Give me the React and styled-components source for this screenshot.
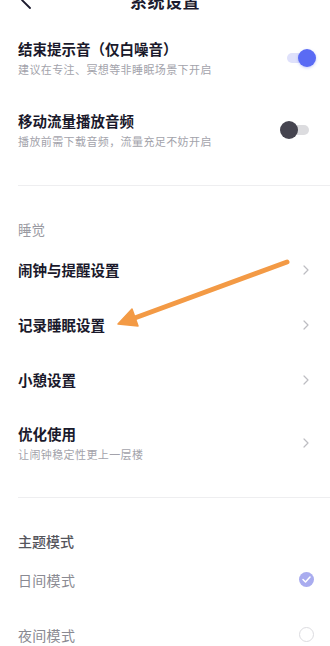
import React from "react";
import styled, { createGlobalStyle } from "styled-components";

const GlobalStyle = createGlobalStyle`
  html, body {
    margin: 0;
    padding: 0;
    background: #ffffff;
    overflow: hidden;
  }
  body {
    font-family: "Noto Sans CJK SC", "Noto Sans", sans-serif;
  }
`;

const Screen = styled.div`
  position: relative;
  width: 330px;
  height: 646px;
  overflow: hidden;
  background: #fff;
`;

// page is scrolled down a bit, the header is half hidden
const Page = styled.div`
  margin-top: -22px;
  display: flex;
  flex-direction: column;
`;

const Header = styled.div`
  height: 44px;
  display: flex;
  align-items: center;
  justify-content: center;
  position: relative;
`;

const BackBtn = styled.div`
  position: absolute;
  left: 20px;
  top: 12px;
  width: 12px;
  height: 20px;
  display: flex;
  align-items: center;
`;

const Title = styled.h1`
  margin: 0;
  font-size: 17px;
  font-weight: 700;
  color: #1c1b2e;
  letter-spacing: 0.5px;
`;

const Row = styled.div`
  height: ${(p) => p.h || 55}px;
  display: flex;
  align-items: center;
  justify-content: space-between;
  padding: 0 ${(p) => p.pr || 14}px 0 18px;
`;

const TextCol = styled.div`
  display: flex;
  flex-direction: column;
  gap: 2px;
`;

const ItemTitle = styled.div`
  font-size: 14.5px;
  line-height: 20px;
  font-weight: 700;
  color: #1a192b;
`;

const ItemSub = styled.div`
  font-size: 11px;
  line-height: 16px;
  letter-spacing: 0.4px;
  color: #a3a3ab;
`;

const Divider = styled.div`
  height: 1px;
  margin: ${(p) => p.mt || 19}px 0 0 18px;
  background: #eeeef0;
`;

const SectionLabel = styled.div`
  padding: 33px 18px ${(p) => (p.dark ? 1 : 3)}px;
  font-size: ${(p) => (p.dark ? 14 : 13.5)}px;
  line-height: 20px;
  color: ${(p) => (p.dark ? "#55555c" : "#9a9aa2")};
  font-weight: ${(p) => (p.dark ? 500 : 400)};
`;

const ModeText = styled.div`
  font-size: 14px;
  line-height: 20px;
  color: #8a8a92;
  letter-spacing: 0.3px;
`;

const SwitchBox = styled.div`
  position: relative;
  width: 36px;
  height: 18px;
`;

const Track = styled.div`
  position: absolute;
  top: 4px;
  height: 10px;
  border-radius: 5px;
  width: 28px;
  ${(p) => (p.on ? "left: 7px;" : "left: 1px;")}
  background: ${(p) => (p.on ? "#dfe1fb" : "#dcdcdf")};
`;

const Knob = styled.div`
  position: absolute;
  top: 0;
  width: 18px;
  height: 18px;
  border-radius: 50%;
  ${(p) => (p.on ? "right: 0;" : "left: 0;")}
  background: ${(p) => (p.on ? "#5a6bf4" : "#45444f")};
  box-shadow: ${(p) => (p.on ? "0 1px 3px rgba(90,107,244,0.35)" : "none")};
`;

const ChevronWrap = styled.div`
  width: 6px;
  height: 10px;
  margin-right: 7px;
  display: flex;
`;

const Radio = styled.div`
  width: 15px;
  height: 15px;
  border-radius: 50%;
  box-sizing: border-box;
  margin-right: 2px;
  display: flex;
  align-items: center;
  justify-content: center;
  background: ${(p) => (p.checked ? "#a9acef" : "transparent")};
  border: ${(p) => (p.checked ? "none" : "1px solid #dcdce0")};
`;

const ArrowLayer = styled.svg`
  position: absolute;
  left: 0;
  top: 0;
  pointer-events: none;
`;

function Switch({ on }) {
  return (
    <SwitchBox>
      <Track on={on} />
      <Knob on={on} />
    </SwitchBox>
  );
}

function Chevron() {
  return (
    <ChevronWrap>
      <svg width="6" height="10" viewBox="0 0 6 10">
        <polyline points="1,1 5,5 1,9" fill="none" stroke="#bdbdc2" strokeWidth="1.2" strokeLinecap="round" strokeLinejoin="round" />
      </svg>
    </ChevronWrap>
  );
}

function ToggleRow({ title, sub, on }) {
  return (
    <Row h={72}>
      <TextCol>
        <ItemTitle>{title}</ItemTitle>
        <ItemSub>{sub}</ItemSub>
      </TextCol>
      <Switch on={on} />
    </Row>
  );
}

function NavRow({ title, sub }) {
  return (
    <Row h={sub ? 72 : 55}>
      <TextCol>
        <ItemTitle>{title}</ItemTitle>
        {sub && <ItemSub>{sub}</ItemSub>}
      </TextCol>
      <Chevron />
    </Row>
  );
}

function ModeRow({ label, checked }) {
  return (
    <Row h={55}>
      <ModeText>{label}</ModeText>
      <Radio checked={checked}>
        {checked && (
          <svg width="9" height="7" viewBox="0 0 9 7">
            <polyline points="1,3.5 3.5,6 8,1" fill="none" stroke="#fff" strokeWidth="1.5" strokeLinecap="round" strokeLinejoin="round" />
          </svg>
        )}
      </Radio>
    </Row>
  );
}

export default function App() {
  return (
    <Screen>
      <GlobalStyle />
      <Page>
        <Header>
          <BackBtn>
            <svg width="12" height="20" viewBox="0 0 12 20">
              <polyline points="10,2 2,10 10,18" fill="none" stroke="#1c1b2e" strokeWidth="1.8" strokeLinecap="round" strokeLinejoin="round" />
            </svg>
          </BackBtn>
          <Title>系统设置</Title>
        </Header>

        <ToggleRow title="结束提示音（仅白噪音）" sub="建议在专注、冥想等非睡眠场景下开启" on />
        <ToggleRow title="移动流量播放音频" sub="播放前需下载音频，流量充足不妨开启" />

        <Divider mt={19} />
        <SectionLabel>睡觉</SectionLabel>
        <NavRow title="闹钟与提醒设置" />
        <NavRow title="记录睡眠设置" />
        <NavRow title="小憩设置" />
        <NavRow title="优化使用" sub="让闹钟稳定性更上一层楼" />

        <Divider mt={18} />
        <SectionLabel dark>主题模式</SectionLabel>
        <ModeRow label="日间模式" checked />
        <ModeRow label="夜间模式" />
      </Page>

      <ArrowLayer width="330" height="646" viewBox="0 0 330 646">
        <line x1="287" y1="262" x2="132" y2="319" stroke="#f39a45" strokeWidth="5" strokeLinecap="round" />
        <polygon points="118,324 132,309 138,326" fill="#f39a45" stroke="#f39a45" strokeWidth="1.5" strokeLinejoin="round" />
      </ArrowLayer>
    </Screen>
  );
}
